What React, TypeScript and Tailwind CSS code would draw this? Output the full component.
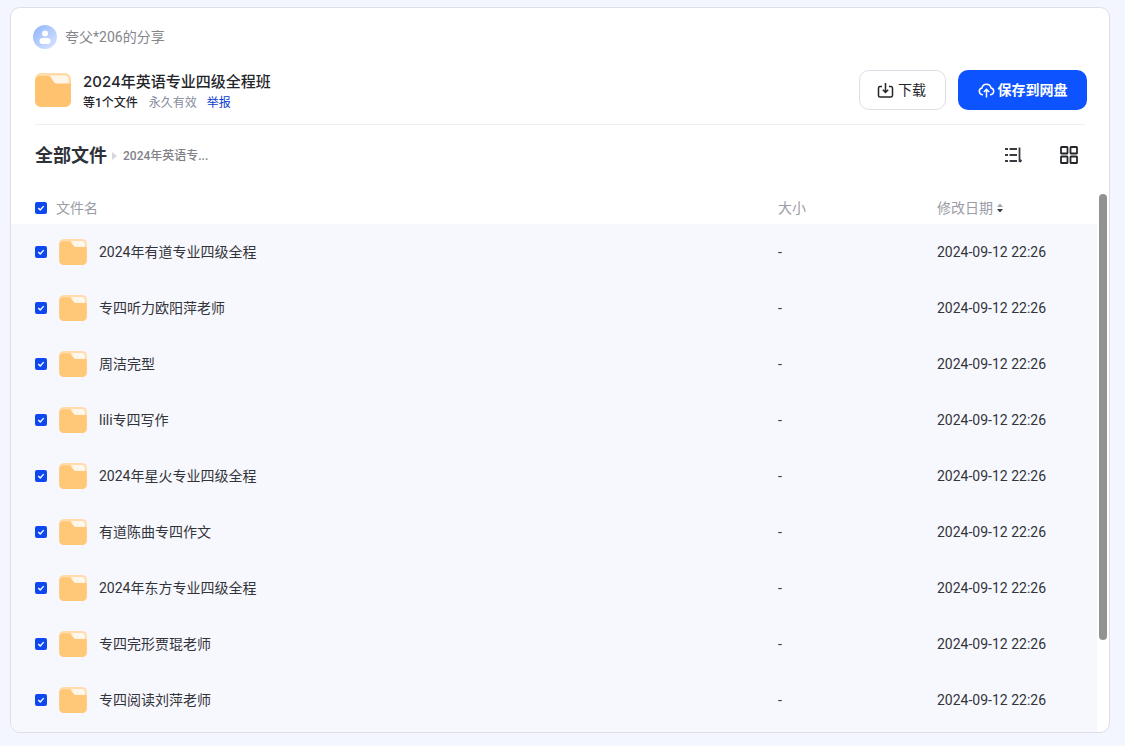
import React from 'react';

const rows = [
  '2024年有道专业四级全程',
  '专四听力欧阳萍老师',
  '周洁完型',
  'lili专四写作',
  '2024年星火专业四级全程',
  '有道陈曲专四作文',
  '2024年东方专业四级全程',
  '专四完形贾琨老师',
  '专四阅读刘萍老师',
];

const FONT = "font-['Roboto','Noto_Sans_CJK_SC',sans-serif]";

const FolderIcon = ({ w, h, body = '#ffc26f' }: { w: number; h: number; body?: string }) => (
  <svg width={w} height={h} viewBox="0 0 36 34" className="shrink-0">
    <rect x="0" y="0" width="36" height="34" rx="6" fill="#ffdcaa" />
    <path d="M15 2.500h15a3.500 3.500 0 0 1 3.500 3.500v6H20z" fill="#fff6ea" />
    <path d="M0 8a5 5 0 0 1 5-5h7c2 0 3 .5 4 2l2.500 3.500c1 1.500 2 2 4 2H36V28a6 6 0 0 1-6 6H6a6 6 0 0 1-6-6z" fill={body} />
  </svg>
);

const Check = () => (
  <span className="flex h-3 w-3 shrink-0 items-center justify-center rounded-[2px] bg-[#0d47ef]">
    <svg width="8" height="8" viewBox="0 0 8 8" fill="none">
      <path d="M1.300 4.100 3.200 6 6.700 2.100" stroke="#fff" strokeWidth="1.400" />
    </svg>
  </span>
);

export default function App() {
  return (
    <div className={`h-[746px] w-[1125px] overflow-hidden bg-[#f3f6fe] pl-2.5 pt-[7px] ${FONT}`}>
      <div className="flex h-[726px] w-[1100px] flex-col overflow-hidden rounded-[10px] border border-[#dcdfe6] bg-white">
        <div className="flex h-[58px] shrink-0 items-center pl-[22px]">
          <div className="flex h-6 w-6 items-center justify-center rounded-full bg-gradient-to-br from-[#8fb4fb] to-[#dbe6fd]">
            <svg width="14" height="16" viewBox="0 0 14 16">
              <circle cx="7" cy="4.500" r="3" fill="#fff" />
              <rect x="1.500" y="9" width="11" height="6" rx="3" fill="#fff" />
            </svg>
          </div>
          <span className="ml-2 text-sm leading-5 text-[#84868c]">夸父*206的分享</span>
        </div>

        <div className="mx-6 flex h-[59px] shrink-0 items-start border-b border-[#eeeff2]">
          <div className="mt-[7px]"><FolderIcon w={36} h={34} /></div>
          <div className="ml-3 mt-[5px]">
            <div className="font-['Inter','Noto_Sans_CJK_SC',sans-serif] text-[15px] font-medium leading-[22px] text-[#25262b]">2024年英语专业四级全程班</div>
            <div className="mt-[1px] flex text-xs leading-[18px]">
              <span className="font-medium text-[#25262b]">等1个文件</span>
              <span className="ml-[11px] text-[#878c9c]">永久有效</span>
              <span className="ml-[10px] text-[#0a3ccf]">举报</span>
            </div>
          </div>
          <div className="-mr-0.5 ml-auto mt-1 flex gap-3">
            <button className="flex h-10 w-[87px] items-center justify-center gap-1 rounded-[10px] border border-[#dcdfe6] bg-white text-sm text-[#25262b]">
              <svg width="17" height="17" viewBox="0 0 17 17" fill="none" stroke="#25262b" strokeWidth="1.500" className="-ml-0.5">
                <path d="M5 4.500H3A1.500 1.500 0 0 0 1.500 6v7.500A1.500 1.500 0 0 0 3 15h11a1.500 1.500 0 0 0 1.500-1.500V6A1.500 1.500 0 0 0 14 4.500h-2M8.500 1v9M5.800 7.800l2.700 2.700 2.700-2.700" />
              </svg>
              下载
            </button>
            <button className="flex h-10 w-[129px] items-center justify-center gap-[3px] rounded-[10px] bg-[#0d53ff] text-sm font-semibold text-white">
              <svg width="17" height="17" viewBox="0 0 17 17" fill="none" stroke="#fff" strokeWidth="1.500">
                <path d="M5 12.800H4.500A3.500 3.500 0 0 1 4 5.900a4.600 4.600 0 0 1 9 0 3.500 3.500 0 0 1-.5 6.900H12M8.500 15.500V7.500M5.800 10l2.700-2.700L11.200 10" />
              </svg>
              保存到网盘
            </button>
          </div>
        </div>

        <div className="flex h-[61px] shrink-0 items-center pl-6 pr-[31px]">
          <span className="text-lg font-bold text-[#2e3238]">全部文件</span>
          <svg width="5" height="8" viewBox="0 0 5 8" className="ml-[5px]"><path d="M0 0l5 4-5 4z" fill="#d6d8dd" /></svg>
          <span className="ml-1.5 text-xs font-medium text-[#7f8289]">2024年英语专...</span>
          <div className="ml-auto flex items-center gap-[36px]">
            <svg width="20" height="16" viewBox="0 0 20 16" fill="none" stroke="#3a3c42" strokeWidth="1.800" className="-mt-0.5">
              <path d="M1 2h3M5.500 2h7.500M1 8h3M5.500 8h7.500M1 14h3M5.500 14h7.500M15.500 .5v14.500M15.500 15l2-2" />
            </svg>
            <svg width="18" height="18" viewBox="0 0 18 18" fill="none" stroke="#25262b" strokeWidth="1.800" className="-mt-0.5">
              <rect x="1" y="1" width="6.500" height="6.500" rx=".6" />
              <rect x="10.500" y="1" width="6.500" height="6.500" rx=".6" />
              <rect x="1" y="10.500" width="6.500" height="6.500" rx=".6" />
              <rect x="10.500" y="10.500" width="6.500" height="6.500" rx=".6" />
            </svg>
          </div>
        </div>

        <div className="flex min-h-0 flex-1">
          <div className="flex min-w-0 flex-1 flex-col">
            <div className="flex h-[38px] shrink-0 items-center pl-6 pt-[6px] text-sm text-[#9a9da5]">
              <Check />
              <span className="ml-[9px] w-[722px]">文件名</span>
              <span className="w-[159px]">大小</span>
              <span>修改日期</span>
              <svg width="8" height="10" viewBox="0 0 8 10" className="ml-[3px]">
                <path d="M4 0.500 7 4H1z" fill="#a3a5ab" />
                <path d="M4 9.500 1 6h6z" fill="#3a3c42" />
              </svg>
            </div>
            <div className="flex-1 bg-[#f7f8fe]">
              {rows.map((name) => (
                <div key={name} className="flex h-14 items-center pl-6 text-sm text-[#33343a]">
                  <Check />
                  <span className="ml-3"><FolderIcon w={28} h={26} body="#ffc877" /></span>
                  <span className="ml-3 w-[679px]">{name}</span>
                  <span className="w-[159px]">-</span>
                  <span>2024-09-12 22:26</span>
                </div>
              ))}
            </div>
          </div>
          <div className="w-3 shrink-0 px-[2px] pt-[8px]">
            <div className="h-[446px] w-2 rounded-full bg-[#929292]" />
          </div>
        </div>
      </div>
    </div>
  );
}
